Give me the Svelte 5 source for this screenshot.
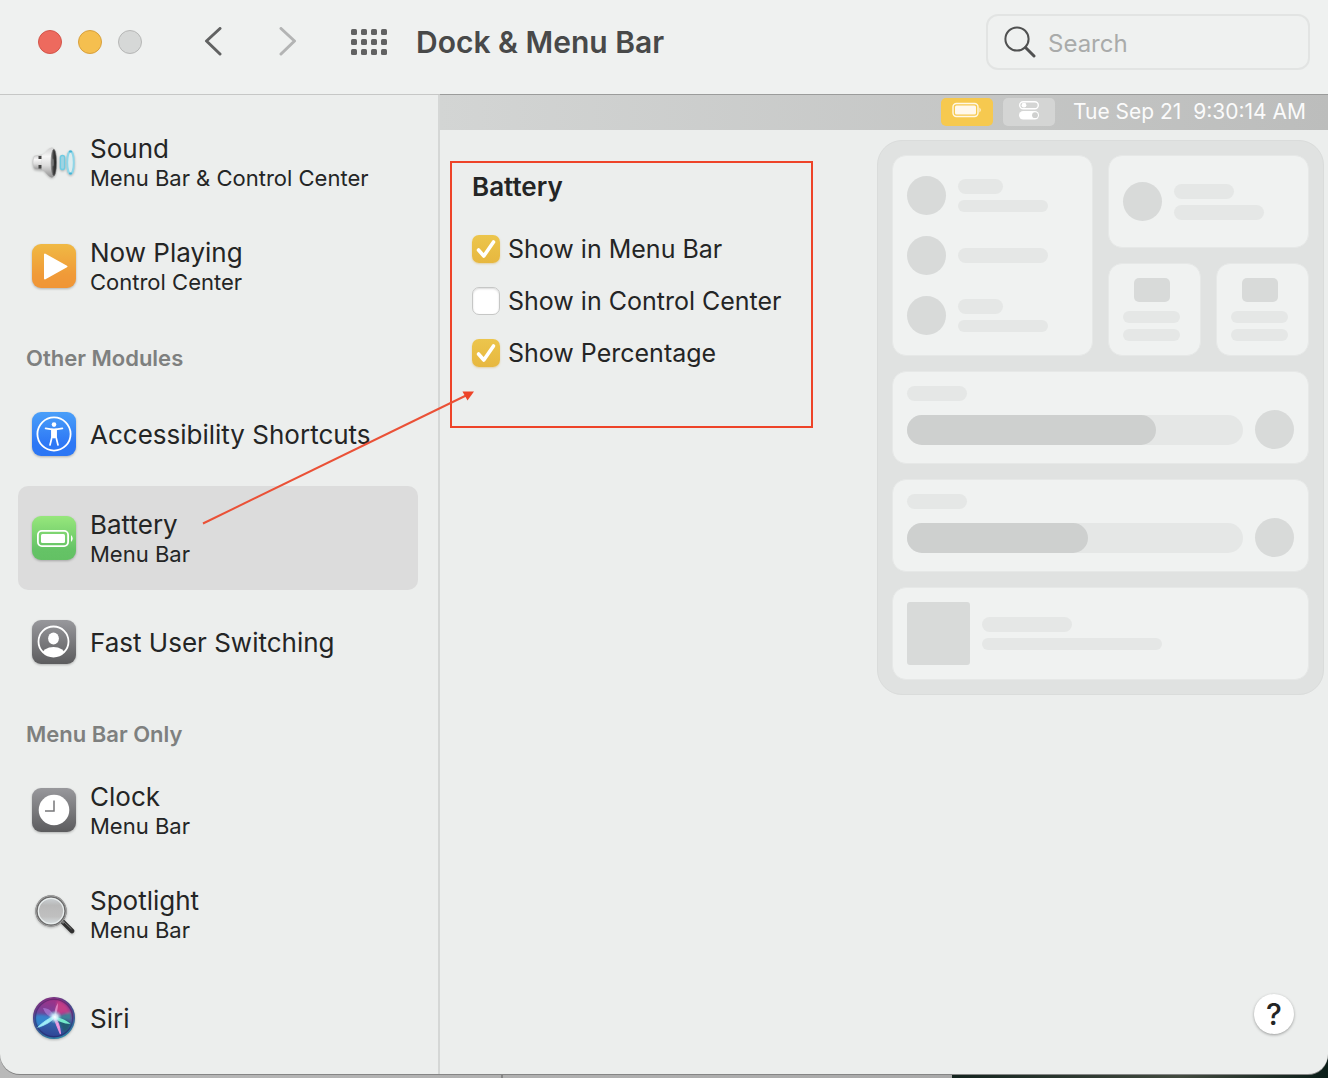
<script>
  let selected = $state('Battery');
  let query = $state('');
  let options = $state([
    { label: 'Show in Menu Bar', on: true },
    { label: 'Show in Control Center', on: false },
    { label: 'Show Percentage', on: true }
  ]);

  const groups = [
    {
      title: '',
      items: [
        { name: 'Sound', where: 'Menu Bar & Control Center', icon: 'sound' },
        { name: 'Now Playing', where: 'Control Center', icon: 'play' }
      ]
    },
    {
      title: 'Other Modules',
      items: [
        { name: 'Accessibility Shortcuts', where: '', icon: 'access' },
        { name: 'Battery', where: 'Menu Bar', icon: 'battery' },
        { name: 'Fast User Switching', where: '', icon: 'user' }
      ]
    },
    {
      title: 'Menu Bar Only',
      items: [
        { name: 'Clock', where: 'Menu Bar', icon: 'clock' },
        { name: 'Spotlight', where: 'Menu Bar', icon: 'spotlight' },
        { name: 'Siri', where: '', icon: 'siri' }
      ]
    }
  ];

  const sliders = [74, 54];
  const dots = [0, 10, 20, 30];
</script>

{#snippet moduleIcon(kind)}
  <svg class="icon" viewBox="0 0 44 44" aria-hidden="true">
    {#if kind === 'sound'}
      <defs>
        <linearGradient id="cone" x1="0" y1="0" x2="0" y2="1">
          <stop offset="0" stop-color="#cfcfcf" /><stop offset=".3" stop-color="#f6f6f6" />
          <stop offset=".6" stop-color="#dcdcdc" /><stop offset="1" stop-color="#909090" />
        </linearGradient>
        <linearGradient id="mouth" x1="0" y1="0" x2="1" y2="0">
          <stop offset="0" stop-color="#8c8c8c" /><stop offset=".5" stop-color="#3a3a3a" /><stop offset="1" stop-color="#1f1f1f" />
        </linearGradient>
      </defs>
      <path d="M2.500 16c-2 3-2 10 0 13l7.500 1v-15z" fill="url(#cone)" stroke="#c2c2c2" stroke-width=".6" />
      <path d="M6.500 16h3.500v3H6.500zM6.500 25h3.500v3.500H6.500z" fill="#444" />
      <path d="M9.500 15.500C14 13 16 8 19.500 7.500c3-.5 5 6 5 15s-2 15.500-5 15c-3.500-.5-5.500-6-10-8.500z" fill="url(#cone)" />
      <ellipse cx="21.800" cy="22.500" rx="2.700" ry="13.300" fill="url(#mouth)" stroke="#777" stroke-width=".6" />
      <ellipse cx="20.800" cy="22.500" rx="1" ry="4" fill="#777" />
      <rect x="28.400" y="15.500" width="4.200" height="14" rx="2.100" fill="#9fd3e2" stroke="#6fcbe2" stroke-width="1.400" />
      <ellipse cx="38.500" cy="22.500" rx="3.300" ry="11.300" fill="#dcecef" stroke="#8fd6e8" stroke-width="2" />
      <path d="M38 11.500h1M38 33.500h1" stroke="#45b3d4" stroke-width="2" stroke-linecap="round" />
    {:else if kind === 'spotlight'}
      <defs>
        <linearGradient id="lens" x1="0" y1="0" x2="0" y2="1">
          <stop offset="0" stop-color="#cfd6da" /><stop offset=".3" stop-color="#b9b9b9" />
          <stop offset=".7" stop-color="#c0c0c0" /><stop offset="1" stop-color="#dce4e7" />
        </linearGradient>
      </defs>
      <path d="M31 30l9 9" stroke="#303030" stroke-width="4.600" stroke-linecap="round" />
      <path d="M31.500 29.500l8 7.500" stroke="#777" stroke-width="1" />
      <path d="M29 28l3 3" stroke="#777" stroke-width="2.500" />
      <circle cx="19" cy="19" r="14.500" fill="url(#lens)" stroke="#696969" stroke-width="2.400" />
      <circle cx="19" cy="19" r="15.200" fill="none" stroke="#b9b9b9" stroke-width=".7" />
      <circle cx="19" cy="19" r="12.600" fill="none" stroke="#e9eeee" stroke-width="1.200" />
    {:else if kind === 'siri'}
      <defs>
        <linearGradient id="orb" x1=".55" y1="0" x2=".4" y2="1">
          <stop offset="0" stop-color="#a52f84" /><stop offset=".35" stop-color="#7d3f98" />
          <stop offset=".6" stop-color="#3566ad" /><stop offset="1" stop-color="#2f3f92" />
        </linearGradient>
        <linearGradient id="rim" x1=".3" y1="0" x2=".7" y2="1">
          <stop offset="0" stop-color="#7d2f80" /><stop offset=".5" stop-color="#3b4f8f" /><stop offset="1" stop-color="#2f86a6" />
        </linearGradient>
        <radialGradient id="glow"><stop offset="0" stop-color="#fff" /><stop offset=".4" stop-color="#d2f6ff" stop-opacity=".85" /><stop offset="1" stop-color="#7cd" stop-opacity="0" /></radialGradient>
        <filter id="soft" x="-20%" y="-20%" width="140%" height="140%"><feGaussianBlur stdDeviation="1.200" /></filter>
      </defs>
      <circle cx="22" cy="22" r="20.300" fill="url(#orb)" stroke="url(#rim)" stroke-width="1.500" />
      <g filter="url(#soft)">
        <path d="M25 5c7 1 11 6 13 12-6-1-10 1-15 4 1-6 1-11 2-16z" fill="#cf3d86" opacity=".8" />
        <path d="M4 19c6-1 12 0 18 3-6 3-11 6-15 10-3-4-4-8-3-13z" fill="#3390d8" opacity=".75" />
        <path d="M24 23c6-1 11 1 15 4-1 5-4 8-7 10-2-6-5-10-8-14z" fill="#205a6a" opacity=".85" />
        <path d="M22 22l17-6v8z" fill="#2f9a94" opacity=".7" />
      </g>
      <path d="M11 12c6 0 10 4 12 10-6-1-10-4-12-10z" fill="#b58be4" opacity=".6" />
      <path d="M26 7c0 5-1 10-3 14-1-5 0-10 3-14z" fill="#efa2dc" opacity=".7" />
      <path d="M5.500 31.500C11 26 17 22 23 20c-3 6-10 9-17.500 11.500z" fill="#9feef8" stroke="#9feef8" stroke-width=".8" stroke-linejoin="round" />
      <path d="M21 21c7 0 13 3 17.500 7-7 0-13-3-17.500-7z" fill="#74e9cb" />
      <path d="M22 21c4 4 6 10 6.500 17-2-5-5-11-6.500-17z" stroke="#ea92dc" stroke-width="1.300" fill="#f5b9ea" />
      <circle cx="23" cy="21" r="7" fill="url(#glow)" />
      <circle cx="22" cy="22" r="18.700" fill="none" stroke="#20194f" stroke-width="1.300" opacity=".4" />
    {:else}
      <defs>
        <linearGradient id="tile-{kind}" x1="0" y1="0" x2="0" y2="1">
          {#if kind === 'play'}
            <stop offset="0" stop-color="#f0b944" /><stop offset=".7" stop-color="#f09a38" /><stop offset="1" stop-color="#f09536" />
          {:else if kind === 'access'}
            <stop offset="0" stop-color="#4a9ff9" /><stop offset=".7" stop-color="#2e78f5" /><stop offset="1" stop-color="#2b76f5" />
          {:else if kind === 'battery'}
            <stop offset="0" stop-color="#97e77c" /><stop offset=".75" stop-color="#65c366" /><stop offset="1" stop-color="#63c164" />
          {:else}
            <stop offset="0" stop-color="#98989c" /><stop offset="1" stop-color="#5c5c5e" />
          {/if}
        </linearGradient>
      </defs>
      <rect width="44" height="44" rx="9" fill="url(#tile-{kind})" />
      {#if kind === 'play'}
        <path d="M13 10.500v24l21.500-12z" fill="#fff" stroke="#fff" stroke-width="2" stroke-linejoin="round" />
      {:else if kind === 'access'}
        <circle cx="22" cy="22" r="16.600" fill="none" stroke="#fff" stroke-width="1.800" />
        <circle cx="22" cy="12.600" r="2.300" fill="#fff" />
        <path d="M13.600 16.400l6.400 1v7.600l-2 8M30.400 16.400l-6.400 1v7.600l2 8" fill="none" stroke="#fff" stroke-width="1.700" stroke-linecap="round" stroke-linejoin="round" />
        <path d="M19.400 16.600h5.200v9l-2.600 1-2.600-1z" fill="#fff" />
      {:else if kind === 'battery'}
        <rect x="5.900" y="14.900" width="30.200" height="15.200" rx="4" fill="none" stroke="#fff" stroke-width="1.800" />
        <rect x="9" y="18" width="24" height="9" rx="1.500" fill="#fff" />
        <path d="M39 19q3.500 3.500 0 7z" fill="#fff" />
      {:else if kind === 'user'}
        <clipPath id="head"><circle cx="21.500" cy="21.500" r="15" /></clipPath>
        <circle cx="21.500" cy="21.500" r="15" fill="none" stroke="#fff" stroke-width="1.800" />
        <ellipse cx="21.500" cy="18.500" rx="5.400" ry="6" fill="#fff" />
        <ellipse cx="21.500" cy="35" rx="11.500" ry="8" fill="#fff" clip-path="url(#head)" />
      {:else}
        <circle cx="22" cy="22" r="15.300" fill="#fff" />
        <path d="M22 12.500v10.500h-9" fill="none" stroke="#77777a" stroke-width="1.500" />
      {/if}
    {/if}
  </svg>
{/snippet}

{#snippet lines(kind)}
  <span class="lines {kind}"><i></i><i></i></span>
{/snippet}

<div class="desktop">
  <div class="window">
    <header>
      <div class="lights">
        <button class="close" aria-label="Close"></button>
        <button class="minimise" aria-label="Minimise"></button>
        <button class="zoom" aria-label="Zoom"></button>
      </div>
      <div class="nav-buttons">
        <button class="plain" aria-label="Back">
          <svg width="18" height="30" viewBox="0 0 18 30"><path d="M16 1.500L2.500 14 16 27" /></svg>
        </button>
        <button class="plain faded" aria-label="Forward" disabled>
          <svg width="18" height="30" viewBox="0 0 18 30"><path d="M2 1.500L15.500 14 2 27" /></svg>
        </button>
      </div>
      <button class="plain" aria-label="Show all">
        <svg width="36" height="26" viewBox="0 0 36 26">
          {#each dots as x}{#each dots.slice(0, 3) as y}
            <rect class="dot" x={x} y={y} width="6" height="6" rx="1.500" />
          {/each}{/each}
        </svg>
      </button>
      <h1>Dock &amp; Menu Bar</h1>
      <label class="search">
        <svg width="32" height="32" viewBox="0 0 32 32" aria-hidden="true">
          <circle cx="13" cy="13" r="11.600" /><path d="M21.500 21.500l8.500 8.500" class="handle" />
        </svg>
        <input type="search" placeholder="Search" aria-label="Search" bind:value={query} />
      </label>
    </header>

    <div class="body">
      <nav aria-label="Modules">
        {#each groups as group}
          {#if group.title}<h2>{group.title}</h2>{/if}
          <ul>
            {#each group.items as item}
              <li>
                <button class="module" class:selected={selected === item.name} onclick={() => (selected = item.name)}>
                  {@render moduleIcon(item.icon)}
                  <span class="names">
                    <span class="name">{item.name}</span>
                    {#if item.where}<span class="where">{item.where}</span>{/if}
                  </span>
                </button>
              </li>
            {/each}
          </ul>
        {/each}
      </nav>

      <main>
        <div class="menubar">
          <span class="chip active">
            <svg width="30" height="16" viewBox="0 0 30 16" aria-hidden="true">
              <rect x="1" y="1.500" width="25" height="13" rx="3.500" fill="none" stroke="#fff8e6" stroke-width="1.400" />
              <rect x="3" y="3.500" width="21" height="9" rx="1.500" fill="#fff8ec" />
              <path d="M27.500 5.500q2.500 2.500 0 5z" fill="#fff8e6" />
            </svg>
          </span>
          <span class="chip">
            <svg width="20" height="20" viewBox="0 0 20 20" aria-hidden="true">
              <rect x=".7" y="1.700" width="18.600" height="7" rx="3.500" fill="none" stroke="#fff" stroke-width="1.400" />
              <circle cx="5" cy="5.200" r="2.400" fill="#fff" />
              <rect y="11" width="20" height="8.500" rx="4.200" fill="#fff" />
              <circle cx="16" cy="15.200" r="2.900" fill="#cfd0cf" />
            </svg>
          </span>
          <time>Tue Sep 21&nbsp; 9:30:14 AM</time>
        </div>

        <div class="pane">
          <section class="settings">
            <h3>Battery</h3>
            {#each options as option}
              <label class="option">
                <span class="tick">
                  <input type="checkbox" bind:checked={option.on} />
                  {#if option.on}
                    <svg width="28" height="28" viewBox="0 0 28 28" aria-hidden="true"><path d="M6.500 15l5.300 6L21.500 7" /></svg>
                  {/if}
                </span>
                {option.label}
              </label>
            {/each}
          </section>

          <div class="preview" aria-hidden="true">
            <div class="card tall">
              <div class="entry"><b></b>{@render lines('short')}</div>
              <div class="entry"><b></b><span class="lines single"><i></i></span></div>
              <div class="entry"><b></b>{@render lines('short')}</div>
            </div>
            <div class="card wide"><div class="entry"><b></b>{@render lines('medium')}</div></div>
            <div class="card small"><em></em><i></i><i></i></div>
            <div class="card small"><em></em><i></i><i></i></div>
            {#each sliders as level}
              <div class="card full slider">
                <i></i>
                <div class="entry">
                  <span class="track"><span class="level" style:width="{level}%"></span></span><b></b>
                </div>
              </div>
            {/each}
            <div class="card full media"><div class="entry"><s></s>{@render lines('long')}</div></div>
          </div>
        </div>

        <footer><button class="help" aria-label="Help">?</button></footer>
      </main>
    </div>

    <svg class="arrow" width="480" height="530" viewBox="0 0 480 530" aria-hidden="true">
      <path d="M203 523.500L466 395.500" /><path class="tip" d="M474 391.500l-11.500 0 5 9z" />
    </svg>
  </div>
  <div class="behind"><span></span></div>
</div>

<style>
  :global(body) { margin: 0; }
  .desktop {
    min-height: 100vh;
    display: flex;
    flex-direction: column;
    background: linear-gradient(90deg, #b9b9b9 0, #a9a9a9 952px, #14241f 952px, #424a3f 1180px, #0a1d18);
    font-family: Inter, 'Liberation Sans', sans-serif;
    color: #242525;
  }
  .window {
    position: relative;
    flex: 1;
    display: flex;
    flex-direction: column;
    overflow: hidden;
    background: #eceeed;
    border-radius: 0 0 20px 20px;
    box-shadow: 0 1px 0 #858585;
  }
  .behind { height: 4px; }
  .behind span { display: block; width: 2px; height: 4px; margin-left: 501px; background: #858585; }
  h1, h2, h3, ul { margin: 0; padding: 0; }
  ul { list-style: none; }
  button { font: inherit; color: inherit; border: 0; padding: 0; background: none; }

  header {
    display: flex;
    align-items: center;
    height: 84px;
    padding: 0 18px 10px 38px;
    background: #eff1f0;
    border-bottom: 1px solid #c6c7c6;
  }
  .lights { display: flex; gap: 16px; margin-right: 62px; }
  .lights button { width: 24px; height: 24px; border-radius: 50%; border: 1px solid #b6b7b6; background: #d6d8d7; }
  .lights .close { background: #ed6a5e; border-color: #d3554a; }
  .lights .minimise { background: #f5bf4f; border-color: #d8a03c; }
  .nav-buttons { display: flex; gap: 57px; margin-right: 54px; }
  .plain svg { display: block; fill: none; stroke: #616262; stroke-width: 3; stroke-linecap: round; stroke-linejoin: round; }
  .faded svg { stroke: #b3b4b4; }
  .plain .dot { fill: #616262; stroke: none; }
  h1 { flex: 1; margin-left: 29px; font-size: 30px; font-weight: 600; line-height: 36px; color: #484949; }
  .search {
    box-sizing: border-box;
    display: flex;
    align-items: center;
    gap: 12px;
    width: 324px;
    height: 56px;
    padding: 0 16px;
    border: 2px solid #e2e4e3;
    border-radius: 12px;
  }
  .search svg { flex: none; fill: none; stroke: #505151; stroke-width: 2; stroke-linecap: round; }
  .search .handle { stroke-width: 3; }
  .search input {
    flex: 1;
    min-width: 0;
    padding: 4px 0 0;
    border: 0;
    outline: 0;
    background: none;
    font: 24px/32px Inter, 'Liberation Sans', sans-serif;
    appearance: none;
  }
  .search input::placeholder { color: #a9abaa; }

  .body { flex: 1; display: flex; }
  nav { flex: none; box-sizing: border-box; width: 440px; padding: 15px 20px 4px 18px; border-right: 2px solid #d5d7d6; }
  h2 { padding: 24px 8px 8px; font-size: 22px; font-weight: 600; line-height: 32px; color: #7e807f; }
  .module {
    display: flex;
    align-items: center;
    gap: 14px;
    width: 100%;
    height: 104px;
    padding: 0 14px;
    border-radius: 10px;
    text-align: left;
  }
  .module.selected { background: #dcdcdc; }
  .icon { flex: none; width: 44px; height: 44px; overflow: visible; filter: drop-shadow(0 1px 1px rgb(0 0 0 / .25)); }
  .names { display: flex; flex-direction: column; padding-top: 2px; white-space: nowrap; }
  .name { font-size: 26px; line-height: 30px; }
  .where { font-size: 22px; line-height: 28px; }

  main { flex: 1; min-width: 0; display: flex; flex-direction: column; }
  .menubar {
    box-sizing: border-box;
    display: flex;
    align-items: center;
    justify-content: flex-end;
    gap: 10px;
    height: 35px;
    padding: 0 22px 2px 0;
    background: linear-gradient(90deg, #d3d5d4, #bcbdbc);
    box-shadow: 0 -1px 0 #9b9c9b;
    color: #fbfbfb;
  }
  .chip { display: grid; place-items: center; width: 52px; height: 28px; padding-bottom: 3px; box-sizing: border-box; border-radius: 5px; background: #d4d5d4; }
  .chip.active { background: #f6c94f; }
  time { margin-left: 8px; font-size: 21px; line-height: 30px; white-space: nowrap; }

  .pane { flex: 1; display: flex; justify-content: space-between; align-items: flex-start; padding: 10px 4px 0 10px; }
  .settings {
    box-sizing: border-box;
    display: flex;
    flex-direction: column;
    gap: 24px;
    min-width: 363px;
    margin-top: 21px;
    padding: 8px 20px 59px;
    border: 2px solid #ee4328;
  }
  h3 { margin-bottom: 8px; font-size: 26px; font-weight: 600; line-height: 32px; }
  .option { display: flex; align-items: center; gap: 8px; font-size: 25px; line-height: 28px; white-space: nowrap; }
  .tick { display: grid; }
  .tick input {
    grid-area: 1 / 1;
    appearance: none;
    width: 28px;
    height: 28px;
    margin: 0;
    border: 1px solid #c6c7c6;
    border-radius: 7px;
    background: #fff;
    box-shadow: inset 0 1px 2px rgb(0 0 0 / .15);
  }
  .tick input:checked { border: 0; background: linear-gradient(#ecc54c, #e7b73f); box-shadow: 0 1px 2px rgb(210 165 60 / .4); }
  .tick svg { grid-area: 1 / 1; pointer-events: none; fill: none; stroke: #fff; stroke-width: 3.600; stroke-linecap: round; stroke-linejoin: round; }

  .preview {
    box-sizing: border-box;
    display: grid;
    grid-template-columns: 201px 93px 93px;
    gap: 15px;
    padding: 14px;
    border: 1px solid #dadcdb;
    border-radius: 25px;
    background: #e0e2e1;
  }
  .card { box-sizing: border-box; display: flex; flex-direction: column; justify-content: center; padding: 14px; border: 1px solid #e6e8e7; border-radius: 14px; background: #f0f2f1; }
  .tall { grid-row: span 2; gap: 21px; padding-block: 20px; }
  .wide { grid-column: span 2; height: 93px; }
  .full { grid-column: span 3; }
  .small { align-items: center; gap: 6px; padding-right: 20px; }
  .slider { gap: 9px; }
  .entry { display: flex; align-items: center; gap: 12px; }
  .entry b { flex: none; width: 39px; height: 39px; border-radius: 50%; background: #d8dad9; }
  .entry s { width: 63px; height: 63px; border-radius: 3px; background: #d8dad9; }
  .small em { width: 36px; height: 24px; margin-bottom: 3px; border-radius: 5px; background: #d8dad9; }
  .card i { display: block; width: 90px; height: 15px; border-radius: 8px; background: #e5e7e6; }
  .small i { width: 57px; height: 12px; }
  .slider i { width: 60px; }
  .lines { display: flex; flex-direction: column; gap: 6px; }
  .short i:first-child { width: 45px; }
  .medium i:first-child { width: 60px; }
  .short i:last-child, .long i:last-child { height: 12px; }
  .long i:last-child { width: 180px; }
  .track { flex: 1; height: 30px; border-radius: 15px; background: #e5e7e6; }
  .level { display: block; height: 30px; border-radius: 15px; background: #ced0cf; }

  footer { display: flex; justify-content: flex-end; padding: 0 34px 40px; }
  .help {
    width: 40px;
    height: 40px;
    border-radius: 50%;
    background: #fff;
    box-shadow: 0 1px 3px rgb(0 0 0 / .35);
    font-size: 30px;
    font-weight: 500;
    line-height: 40px;
  }

  .arrow { position: absolute; top: 0; left: 0; pointer-events: none; }
  .arrow path { fill: none; stroke: #ea5137; stroke-width: 2; }
  .arrow .tip { fill: #ee4328; stroke: none; }
</style>
